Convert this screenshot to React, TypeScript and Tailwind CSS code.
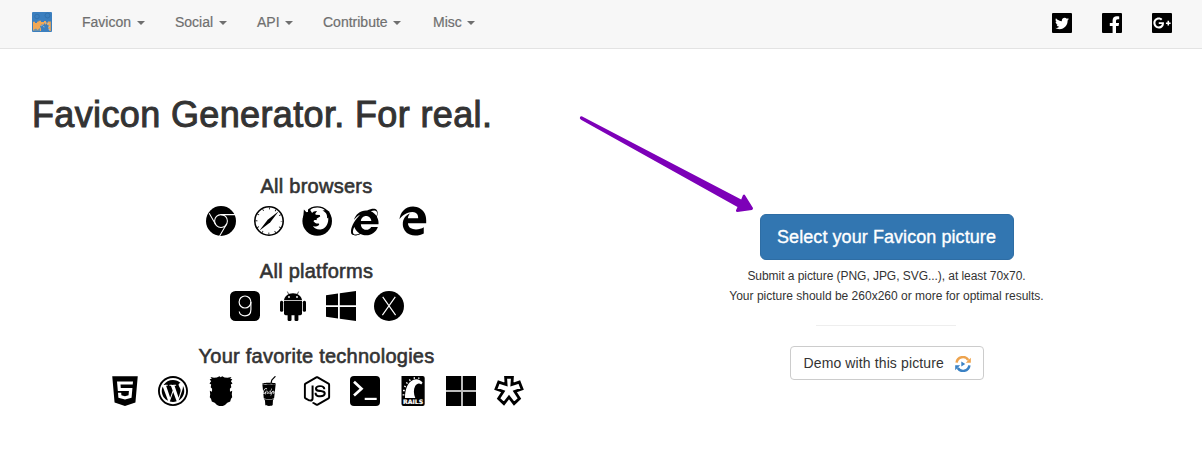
import React from "react";
import { ImIe, ImEdge, ImWordpress, ImTwitter } from "react-icons/im";
import { FaGulp, FaNodeJs, FaHtml5, FaFacebookF, FaGooglePlusG } from "react-icons/fa";

function Chrome() {
  return (
    <svg viewBox="0 0 30 30" className="size-[30px]">
      <circle cx="15" cy="15" r="15" fill="#000" />
      <g fill="none" stroke="#fff" strokeWidth="1.05">
        <circle cx="15" cy="15" r="6.4" />
        <path d="M15 8.6H29M9.5 18.2L3.2 7.2M20.5 18.2L13.6 30" />
      </g>
    </svg>
  );
}

function Safari() {
  return (
    <svg viewBox="0 0 30 30" className="size-[30px]">
      <circle cx="15" cy="15" r="14.2" fill="#fff" stroke="#000" strokeWidth="1.6" />
      <circle cx="15" cy="15" r="12.5" fill="none" stroke="#000" strokeWidth="2" strokeDasharray="0.8 5.745" strokeDashoffset="0.4" />
      <path d="M24.7 5.3L16.3 16.3L5.3 24.7L13.7 13.7Z" fill="#000" />
      <path d="M13.9 15.1L7.5 22.5L14.9 16.1Z" fill="#000" />
    </svg>
  );
}

function Firefox() {
  return (
    <svg viewBox="0 0 30 30" className="size-[30px]">
      <circle cx="15.2" cy="15" r="14.8" />
      <path d="M0 0H6V6L3 7L0 12Z" fill="#fff" />
      <path d="M1.9 3.6L4.4 6.3L7.3 5.9L9.6 3.8L10.3 6.7L13 8.2L9 12L1 14Z" />
      <path d="M8.2 4C12 .7 19.5 .7 23.5 4.7C22.5 3.8 21 4.2 20.5 4.8C24.5 6.2 25.6 9.8 25 12.4L26.2 11.6C26.8 17 24.3 22.3 19.5 23.3C15.8 24 12.3 22.7 11 20.1C12.8 21.1 15.2 20.2 17 18.9C17.5 18.1 17 17.6 15.8 17.6C13.8 17.6 12.8 16.4 11.6 15.5C11.6 13.9 13.5 13.9 14.6 14.2L14.8 12.6L18.2 10.4L17.8 9L13.8 8.8L13.2 7.8L15 5.1C12.8 5 10.8 6 10.1 6.9Z" fill="#fff" />
      <path d="M24.4 4.6L25.4 7.6L27.5 9.8L27.3 5.5Z" />
    </svg>
  );
}

function Ios() {
  return (
    <svg viewBox="0 0 30 30" className="size-[30px]">
      <rect width="30" height="30" rx="5.5" />
      <g fill="none" stroke="#fff" strokeWidth="1.15">
        <ellipse cx="15" cy="11" rx="5.9" ry="6" />
        <path d="M20.9 11V18.5C20.9 22.5 18.4 24.8 15 24.8C11.8 24.8 9.7 23.2 9.2 20.5" />
      </g>
    </svg>
  );
}

function Android() {
  return (
    <svg viewBox="0 0 30 30" className="size-[30px]">
      <path d="M6 9.2C6.2 5.6 9.8 2.2 15 2.2S23.8 5.6 24 9.2Z" />
      <path d="M10.8 3.6L9.4 0.6M19.2 3.6L20.6 0.6" stroke="#000" strokeWidth="0.7" />
      <circle cx="11" cy="6" r="0.9" fill="#fff" />
      <circle cx="19" cy="6" r="0.9" fill="#fff" />
      <path d="M6 10.1H24V22.5Q24 24.2 22.3 24.2H7.7Q6 24.2 6 22.5Z" />
      <rect x="2" y="9.8" width="3.2" height="11" rx="1.5" />
      <rect x="24.8" y="9.8" width="3.2" height="11" rx="1.5" />
      <rect x="9.6" y="22" width="3.9" height="8" rx="1.3" />
      <rect x="16.5" y="22" width="3.9" height="8" rx="1.3" />
    </svg>
  );
}

function Windows() {
  return (
    <svg viewBox="0 0 30 30" className="size-[30px]">
      <path d="M0 4.2L12 2.5V14.2H0ZM13.8 2.2L30 0V14.2H13.8ZM0 15.9H12V27.5L0 25.8ZM13.8 15.9H30V30L13.8 27.8Z" />
    </svg>
  );
}

function OsX() {
  return (
    <svg viewBox="0 0 30 30" className="size-[30px]">
      <circle cx="15" cy="15" r="15" />
      <path d="M8.7 5.8L21.6 24.2M21.3 5.8L8.4 24.2" fill="none" stroke="#fff" strokeWidth="1.15" />
    </svg>
  );
}

function Grunt() {
  return (
    <svg viewBox="0 0 30 30" className="size-[30px]">
      <path d="M4.5 1L8 1.8L10.8 1.6L13.5 .3L14.7 1.2L16.2 .3L18.5 1.6L21.5 1.8L25.5 1L24.2 2.8L26.3 3.3L24.9 5.2L26.5 7.4L24.8 8.4L25.3 11.2L23.9 12.8L24 15.8L26.2 14.8L25.8 18.3L26.2 21.3L25 22.8L24.2 25.6L21.3 26.8L19 29L16.8 30H13.2L11 29L8.7 26.8L5.8 25.6L5 22.8L3.8 21.3L4.2 18.3L3.8 14.8L6 15.8L6.1 12.8L4.7 11.2L5.2 8.4L3.5 7.4L5.1 5.2L3.7 3.3L5.8 2.8Z" />
    </svg>
  );
}

function PowerShell() {
  return (
    <svg viewBox="0 0 30 30" className="size-[30px]">
      <rect width="30" height="30" rx="4" />
      <path d="M4 5.8L11.5 12.7L4 19.5" fill="none" stroke="#fff" strokeWidth="2.7" />
      <path d="M14.7 22.9H26.7" stroke="#fff" strokeWidth="2.2" />
    </svg>
  );
}

function Rails() {
  return (
    <svg viewBox="0 0 30 30" className="size-[30px]">
      <path d="M3.5 0H24.7Q26.7 0 26.7 2V28Q26.7 30 24.7 30H5.5Q3.5 30 3.5 28Z" />
      <path d="M7 22C7 14 9.2 6.6 15 4C18.5 2.4 22.5 3.5 24.6 6.8L23.2 8.4C21.5 6.6 18.7 7.2 17.2 10C15.3 13.4 15.6 18 17.3 22Z" fill="#fff" />
      <path d="M6.2 10L7.8 10.8M8.2 6.4L9.6 7.5M11.4 3.3L12.3 4.8M16.2 1.2L16.4 2.8M21 1.5L20.6 2.8M5 14.5H6.8M4.6 18.8H6.4" stroke="#fff" strokeWidth="1.3" />
      <text x="5.1" y="28" textLength="20" lengthAdjust="spacing" fill="#fff" stroke="#fff" strokeWidth="0.2" className="font-['DejaVu_Sans',sans-serif] text-[6.2px] font-bold">RAILS</text>
    </svg>
  );
}

function Tiles() {
  return (
    <svg viewBox="0 0 30 30" className="size-[30px]">
      <path d="M0 0H30V30H0Z" fill="#bbb" />
      <path d="M0 0H15V14H0ZM17 0H30V14H17ZM0 16H15V30H0ZM17 16H30V30H17Z" />
    </svg>
  );
}

function Asterisk() {
  return (
    <svg viewBox="0 0 30 30" className="size-[30px]">
      <path d="M11.6 1.4H18.4L17.9 8.6L25.3 6.1L28 12.9L20.8 15.4L25.4 22.6L20.1 27.6L15 21L9.9 27.6L4.6 22.6L9.2 15.4L2 12.9L4.7 6.1L12.1 8.6Z" fill="#fff" stroke="#000" strokeWidth="2.8" />
    </svg>
  );
}

function BrandMark() {
  return (
    <svg viewBox="0 0 20 20" className="size-5">
      <rect width="20" height="20" rx="1" fill="#3b7fbf" />
      <g fill="none" stroke="#3272ad" strokeWidth="1">
        <circle cx="5" cy="4.5" r="2.3" />
        <circle cx="15.5" cy="3.5" r="2.5" />
      </g>
      <path d="M1 9.7H3V11H5V9.7H6.5V8.8H9V10H12V9H14V10.5H16V9.5H18.8V19H1Z" fill="#f0a856" />
      <path d="M1 19L2 17.5L4 16.5L5.5 18L8 16V19Z" fill="#6f93ab" />
      <path d="M9 20V16.5L8 14.5L10 12.3L11.5 13L12.5 11L13.5 12.8L15.5 10.5L15 12.5L17.2 14L16 16L17.5 17.5L17 20Z" fill="#3b7fbf" />
      <path d="M9 14L11 12.8M13.2 11.5V10.2M15.2 12L17 11.2M16.2 15L18 14.2M16.5 17.5H18M11 14.5L12.5 15" stroke="#a9c4d6" strokeWidth=".8" />
    </svg>
  );
}

function DemoMark() {
  return (
    <svg viewBox="0 0 16 16" className="size-4">
      <path d="M1.6 6.7A6.4 6.4 0 0 1 13.3 4" fill="none" stroke="#eda34e" strokeWidth="2.5" />
      <path d="M15.8 1.8V6.8H10.8Z" fill="#eda34e" />
      <path d="M14.4 9.3A6.4 6.4 0 0 1 2.7 12" fill="none" stroke="#3b82c4" strokeWidth="2.5" />
      <path d="M.2 14.2V9.2H5.2Z" fill="#3b82c4" />
      <path d="M6.3 5.6L10.3 8L6.3 10.4Z" fill="#3b82c4" />
    </svg>
  );
}

const menu = [
  { label: "Favicon", width: "w-[93px]" },
  { label: "Social", width: "w-[82px]" },
  { label: "API", width: "w-[66px]" },
  { label: "Contribute", width: "w-[110px]" },
  { label: "Misc", width: "w-[60px]" },
];

function Slot({ children }: { children: React.ReactNode }) {
  return <span className="flex size-[30px] shrink-0 items-center justify-center overflow-visible">{children}</span>;
}

function Group({ title, children, className }: { title: string; children: React.ReactNode; className: string }) {
  return (
    <section className={className}>
      <h2 className="text-center text-[20px] leading-[22px] tracking-[0.25px] [-webkit-text-stroke:0.6px_#333]">{title}</h2>
      <div className="mt-[9px] flex justify-center gap-[18px] text-black">
        {React.Children.map(children, (c) => <Slot>{c}</Slot>)}
      </div>
    </section>
  );
}

export default function App() {
  return (
    <div className="relative h-[468px] w-[1202px] overflow-hidden bg-white font-['Liberation_Sans',Arial,sans-serif] text-[#333]">
      <header className="flex h-[49px] items-start border-b border-[#e3e3e3] bg-[#f7f7f7] pl-8 pr-[30px]">
        <a className="mt-3 mr-[30px]"><BrandMark /></a>
        <nav className="flex text-[14px] leading-5 text-[#6f6f6f]">
          {menu.map((m) => (
            <a key={m.label} className={`mt-3 flex items-center whitespace-nowrap [-webkit-text-stroke:0.2px_#6f6f6f] ${m.width}`}>
              {m.label}
              <svg viewBox="0 0 8 4" className="mt-0.5 ml-[5.5px] h-1 w-2 fill-[#6f6f6f]"><path d="M0 0H8L4 4Z" /></svg>
            </a>
          ))}
        </nav>
        <div className="mt-[13px] ml-auto flex gap-[30px] text-white">
          <a className="flex size-5 items-center justify-center rounded-[1px] bg-black"><ImTwitter className="size-[14px]" /></a>
          <a className="flex size-5 items-end justify-end overflow-hidden rounded-[1px] bg-black pr-0.5"><FaFacebookF className="-mb-px h-[18px] w-[11px]" /></a>
          <a className="flex size-5 items-center justify-center rounded-[1px] bg-black"><FaGooglePlusG className="size-[18px]" /></a>
        </div>
      </header>

      <main className="flex px-8">
        <div className="w-[570px]">
          <h1 className="mt-[46px] whitespace-nowrap text-[36px] leading-10 tracking-[0.36px] [-webkit-text-stroke:1px_#333]">Favicon Generator. For real.</h1>
          <Group title="All browsers" className="mt-10">
            <Chrome />
            <Safari />
            <Firefox />
            <ImIe className="ml-px size-[30px]" />
            <ImEdge className="ml-px size-[30px]" />
          </Group>
          <Group title="All platforms" className="mt-6">
            <Ios />
            <Android />
            <Windows />
            <OsX />
          </Group>
          <Group title="Your favorite technologies" className="mt-6">
            <FaHtml5 className="size-[34px] shrink-0" />
            <ImWordpress className="size-[30px]" />
            <Grunt />
            <FaGulp className="size-[30px]" />
            <FaNodeJs className="size-[30px]" />
            <PowerShell />
            <Rails />
            <Tiles />
            <Asterisk />
          </Group>
        </div>
        <div className="flex w-[570px] flex-col items-center pt-[165px] pl-0.5">
          <button className="h-[46px] w-[254px] whitespace-nowrap rounded-md border border-[#2e6da4] bg-[#3276b1] text-[18px] tracking-[0.07px] text-white [-webkit-text-stroke:0.35px_#fff]">Select your Favicon picture</button>
          <p className="mt-[6px] text-center text-[12px] leading-5 whitespace-nowrap">
            <span className="tracking-[-0.05px]">Submit a picture (PNG, JPG, SVG...), at least 70x70.</span><br />
            Your picture should be 260x260 or more for optimal results.
          </p>
          <hr className="mt-[19px] mr-px w-[140px] border-[#eee]" />
          <button className="mt-5 flex h-[34px] w-[194px] items-center rounded border border-[#ccc] pl-[13px] text-[14px] tracking-[0.12px] whitespace-nowrap">
            Demo with this picture
            <span className="mt-0.5 ml-auto mr-3"><DemoMark /></span>
          </button>
        </div>
      </main>

      <svg viewBox="0 0 180 100" className="pointer-events-none absolute top-[115px] left-[576px] h-[100px] w-[180px]">
        <path d="M6.2 1.4L165.2 84.6L166.9 80.2Q168.2 78.6 169.2 80.4L177 93Q177.2 94.6 175.8 95L161.4 97Q159.4 96.8 160 95.2L161.5 92L5 4.7Q3.3 3.5 4 2Q4.8 .9 6.2 1.4Z" fill="#7d00b8" />
      </svg>
    </div>
  );
}
